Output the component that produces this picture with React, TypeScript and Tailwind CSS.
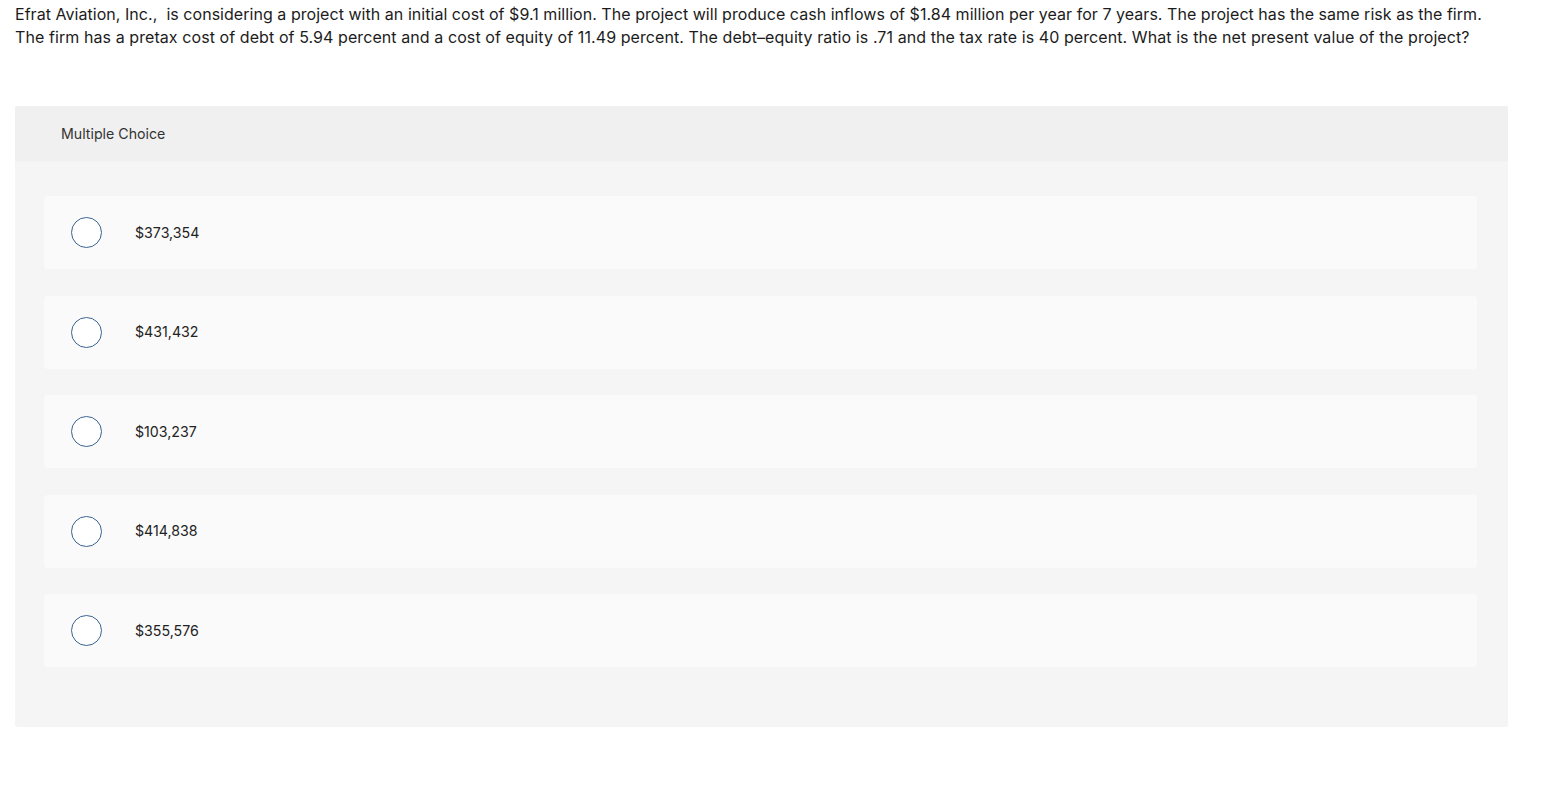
const choices = ["$373,354", "$431,432", "$103,237", "$414,838", "$355,576"];

function Choice({ label }: { label: string }) {
  return (
    <div className="flex h-[73px] items-center rounded-[4px] bg-[#fafafa] pl-[27px]">
      <span className="h-[31px] w-[31px] shrink-0 rounded-full border-[1.5px] border-[#3b6391] bg-white" />
      <span className="ml-[33px] text-[14.2px] text-[#222]">{label}</span>
    </div>
  );
}

export default function App() {
  return (
    <div className="min-h-screen bg-white font-['Inter',sans-serif]">
      <p className="px-[15px] pt-[3px] text-[16px] leading-[23px] tracking-[0.04px] text-[#1c1c1c]">
        Efrat Aviation, Inc.,&nbsp; is considering a project with an initial cost of $9.1 million. The project will produce
        cash inflows of $1.84 million per year for 7 years. The project has the same risk as the firm.
        <br />
        <span className="tracking-[0.08px]">
          The firm has a pretax cost of debt of 5.94 percent and a cost of equity of 11.49 percent. The debt–equity ratio
          is .71 and the tax rate is 40 percent. What is the net present value of the project?
        </span>
      </p>

      <div className="ml-[15px] mt-[57px] w-[1493px] overflow-hidden rounded-[2px] bg-[#f5f5f5]">
        <div className="flex h-[55px] items-center bg-[#f0f0f0] pl-[46px] text-[14.2px] text-[#333]">
          Multiple Choice
        </div>
        <div className="flex flex-col gap-[26.5px] pb-[60px] pl-[29px] pr-[31px] pt-[35px]">
          {choices.map((c) => (
            <Choice key={c} label={c} />
          ))}
        </div>
      </div>
    </div>
  );
}
